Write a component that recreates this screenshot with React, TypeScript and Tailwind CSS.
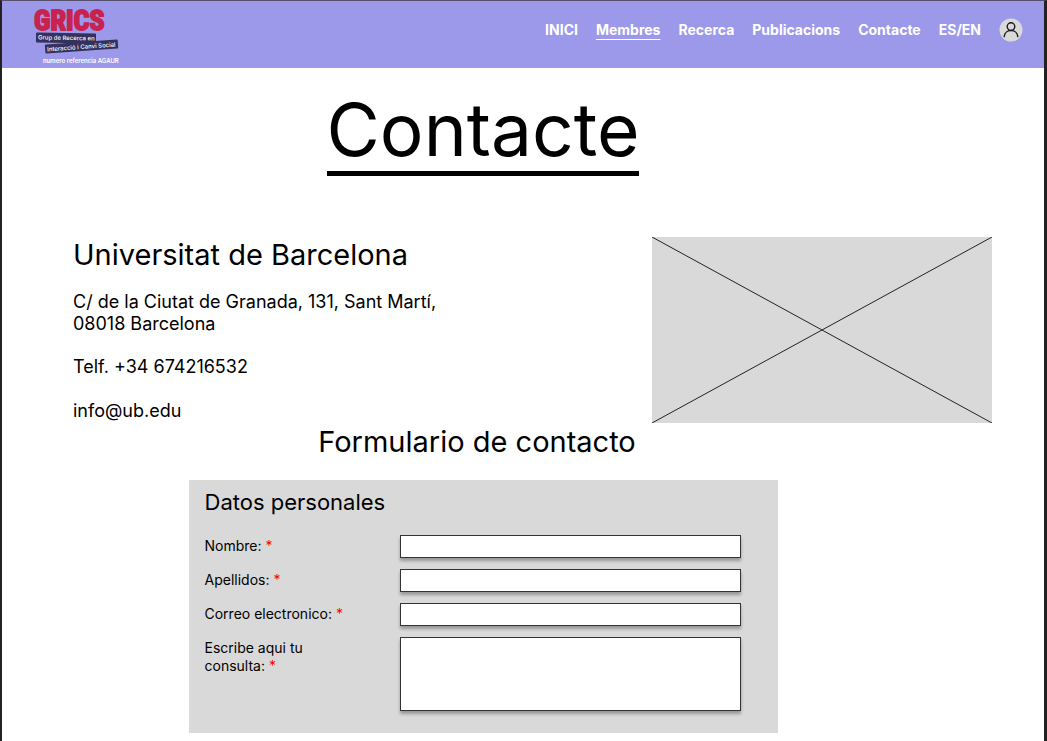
import type { ReactNode } from "react";

const links = ["INICI", "Membres", "Recerca", "Publicacions", "Contacte", "ES/EN"];

function Logo() {
  return (
    <svg viewBox="0 0 96 64" className="h-16 w-24" role="img" aria-label="GRICS">
      <text
        x="2"
        y="29"
        fontSize="28"
        fontWeight="700"
        fill="#c8234f"
        stroke="#c8234f"
        strokeWidth="1.8"
        strokeLinejoin="round"
        fontFamily="'Roboto Condensed', 'Liberation Sans Narrow', sans-serif"
      >
        GRICS
      </text>
      <g fontFamily="Inter, sans-serif" fill="#fff" fontWeight="500">
        <rect x="4" y="32" width="60" height="10" rx="1" fill="#34315c" transform="rotate(1 35 37)" />
        <rect x="13" y="41" width="73" height="9" rx="1" fill="#34315c" transform="rotate(-4 50 45)" />
        <text x="6" y="39" fontSize="6" transform="rotate(1 35 37)">Grup de Recerca en</text>
        <text x="15" y="48" fontSize="6" transform="rotate(-4 50 45)">Interacció i Canvi Social</text>
        <text x="11" y="62" fontSize="6" fontWeight="600">numero referencia AGAUR</text>
      </g>
    </svg>
  );
}

function UserIcon() {
  return (
    <svg viewBox="0 0 24 24" className="size-6" fill="none" stroke="#1a1a1a" strokeWidth="1.4" strokeLinecap="round">
      <circle cx="12" cy="12" r="11.5" fill="#d9d9d9" stroke="none" />
      <circle cx="12" cy="8.6" r="3.8" />
      <path d="M5.2 18.6c.3-3.7 3.1-6.1 6.800-6.100s6.500 2.400 6.800 6.100" />
    </svg>
  );
}

function Field({ id, label, children }: { id: string; label: string; children: ReactNode }) {
  return (
    <div className="flex items-start justify-between">
      <label htmlFor={id} className="w-36 pt-0.5 text-[14px] leading-[18px]">
        {label} <span className="text-[#ff0000]">*</span>
      </label>
      {children}
    </div>
  );
}

const box = "block w-[341px] border border-[#333] bg-white px-1 text-sm shadow-[0_3px_3px_rgba(0,0,0,0.3)] outline-none";

export default function App() {
  return (
    <div className="min-h-screen border-t border-r-3 border-l-2 border-t-[#55506e] border-r-[#222] border-l-[#222] bg-white font-[Inter,sans-serif] text-black">
      <header className="flex h-[67px] items-start justify-between bg-[#9c99eb] pr-[21px] pl-[30px]">
        <Logo />
        <nav className="flex items-center gap-[18px] pt-[17px] text-[14px] leading-6 font-bold text-white">
          {links.map((l) => (
            <a key={l} href="#" className={l === "Membres" ? "underline decoration-1 underline-offset-4" : ""}>
              {l}
            </a>
          ))}
          <button type="button" aria-label="Compte">
            <UserIcon />
          </button>
        </nav>
      </header>
      <main>
        <div className="flex justify-center pt-5 pr-20">
          <h1 className="border-b-[5px] border-black text-[73px] leading-[83px]">Contacte</h1>
        </div>
        <section className="flex items-start justify-between pt-[61px] pr-[52px] pb-px pl-[71px]">
          <div className="text-[18px] leading-[22px]">
            <h2 className="text-[29px] leading-9">Universitat de Barcelona</h2>
            <address className="pt-[18px] not-italic">
              C/ de la Ciutat de Granada, 131, Sant Martí,
              <br />
              08018 Barcelona
            </address>
            <p className="pt-[21px]">Telf. +34 674216532</p>
            <p className="pt-[22px]">
              <a href="mailto:info@ub.edu">info@ub.edu</a>
            </p>
          </div>
          <svg viewBox="0 0 340 186" className="h-[186px] w-[340px] bg-[#d9d9d9]" stroke="#222" strokeWidth="1">
            <path d="M0 0 340 186M0 186 340 0" />
          </svg>
        </section>
        <h2 className="pr-[92px] text-center text-[29px] leading-9">Formulario de contacto</h2>
        <div className="flex justify-center pt-5 pr-20">
          <form className="w-[589px] bg-[#d9d9d9] pt-[7px] pr-[37px] pb-[22px] pl-4">
            <h3 className="pb-[18px] text-[22px] leading-[30px]">Datos personales</h3>
            <div className="flex flex-col gap-[11px]">
              <Field id="nombre" label="Nombre:">
                <input id="nombre" type="text" className={`${box} h-[23px]`} />
              </Field>
              <Field id="apellidos" label="Apellidos:">
                <input id="apellidos" type="text" className={`${box} h-[23px]`} />
              </Field>
              <Field id="correo" label="Correo electronico:">
                <input id="correo" type="email" className={`${box} h-[23px]`} />
              </Field>
              <Field id="consulta" label="Escribe aqui tu consulta:">
                <textarea id="consulta" className={`${box} h-[74px] resize-none`} />
              </Field>
            </div>
          </form>
        </div>
      </main>
    </div>
  );
}
